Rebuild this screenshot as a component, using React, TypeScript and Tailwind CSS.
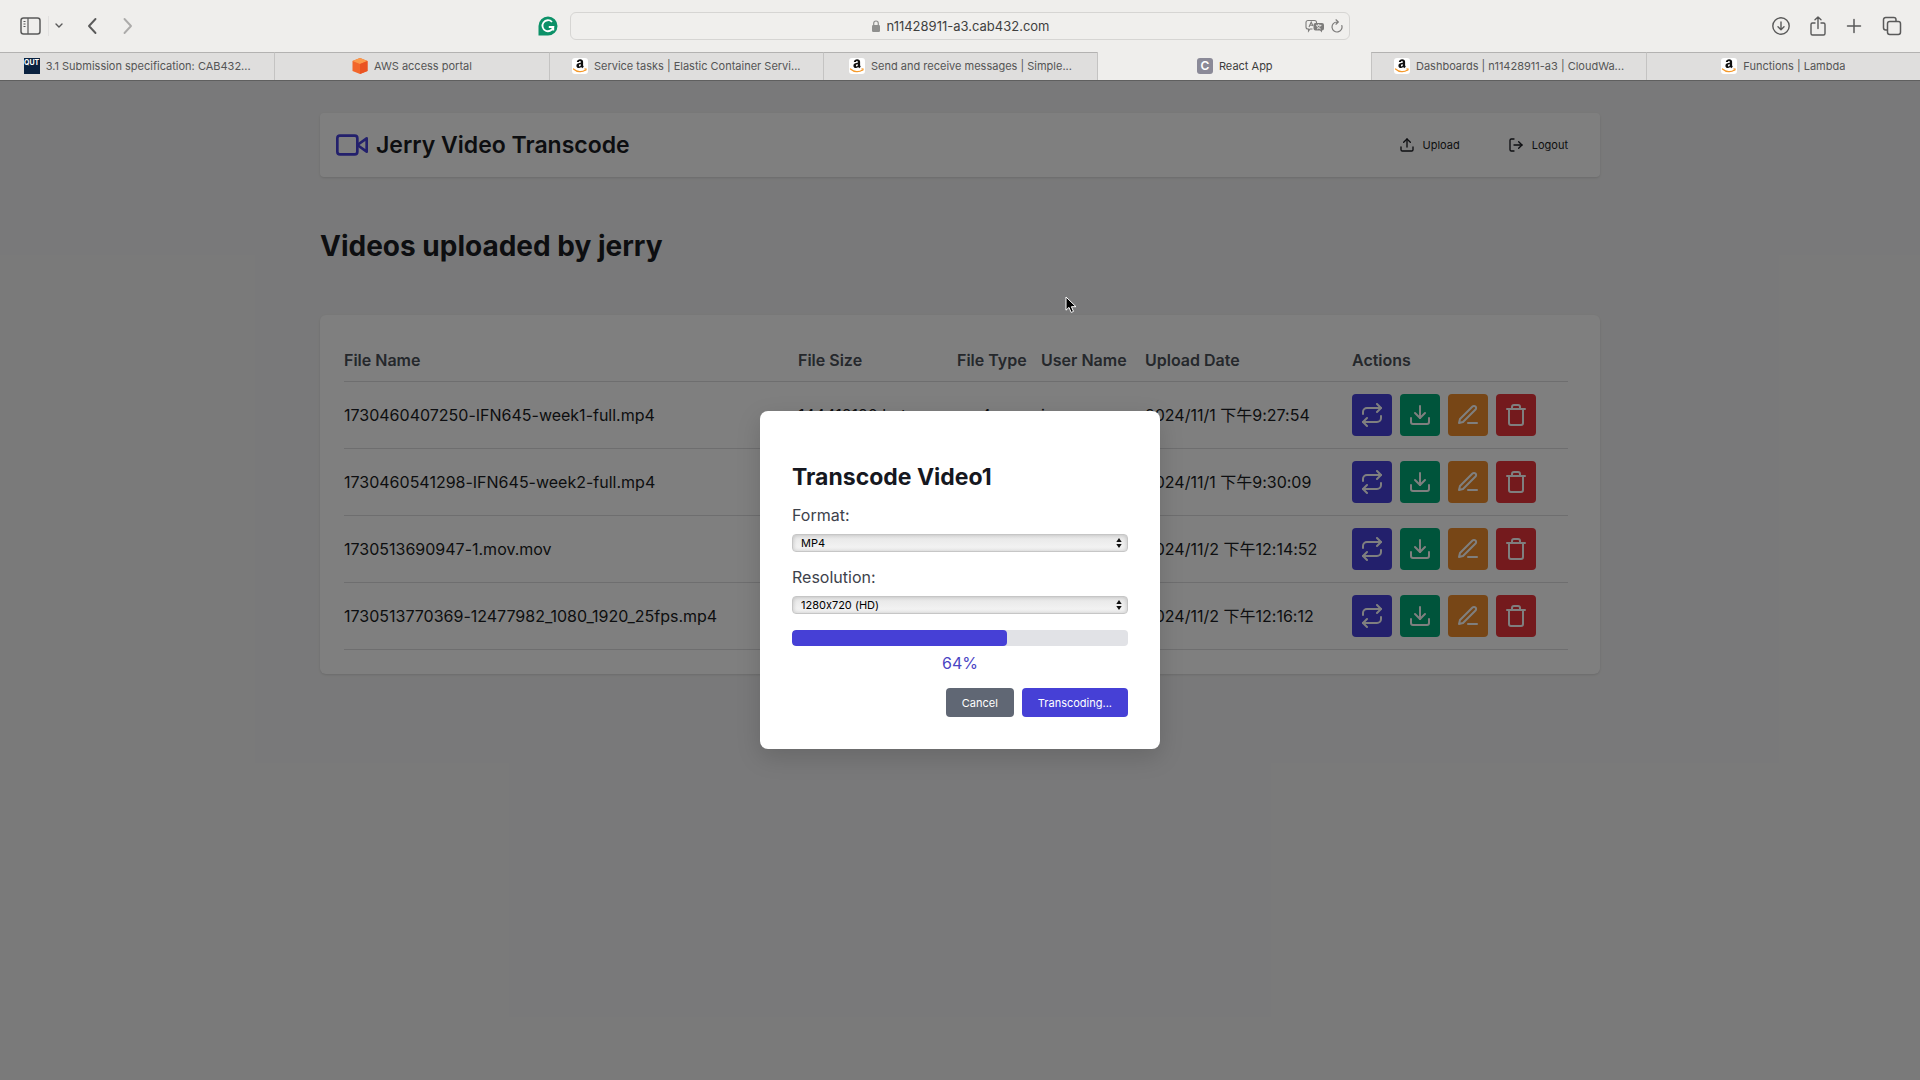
import type { ReactNode } from "react";
import {
  FiDownload,
  FiEdit3,
  FiLogOut,
  FiRepeat,
  FiTrash,
  FiUpload,
  FiVideo,
} from "react-icons/fi";

const videos = [
  { name: "1730460407250-IFN645-week1-full.mp4", size: "144412120 bytes", type: "mp4", user: "jerry", date: "2024/11/1 下午9:27:54" },
  { name: "1730460541298-IFN645-week2-full.mp4", size: "131240518 bytes", type: "mp4", user: "jerry", date: "2024/11/1 下午9:30:09" },
  { name: "1730513690947-1.mov.mov", size: "20481236 bytes", type: "mov", user: "jerry", date: "2024/11/2 下午12:14:52" },
  { name: "1730513770369-12477982_1080_1920_25fps.mp4", size: "8345120 bytes", type: "mp4", user: "jerry", date: "2024/11/2 下午12:16:12" },
];

function AmazonIcon() {
  return (
    <svg viewBox="0 0 16 16" className="size-4 shrink-0" aria-hidden="true">
      <rect width="16" height="16" rx="3" fill="#fff" />
      <path
        d="M4.800 3.900C5.100 2 6.500 1.200 8.100 1.200c1.900 0 3 .9 3 2.600v3.400c0 .6.3 1 .7 1.500L10.200 10.200c-.5-.4-.8-.7-1-1.100-1.700 1.700-4.800 1.200-4.800-1.400 0-2.200 2-2.800 4.400-2.900 0-1 0-1.700-.9-1.700-.6 0-.9.4-1 1zM8.800 6.300c-1.100 0-1.900.3-1.900 1.300 0 1.300 1.900 1.100 1.900-.6z"
        fill="#111"
      />
      <path d="M1.500 10.900c3.600 3.300 8.600 3.500 12 1" fill="none" stroke="#f59a2c" strokeWidth="1.300" strokeLinecap="round" />
      <path d="M12.300 10.900l2-.1-.5 1.900" fill="none" stroke="#f59a2c" strokeWidth=".9" />
    </svg>
  );
}

function AwsIcon() {
  return (
    <svg viewBox="0 0 16 16" className="size-4 shrink-0" aria-hidden="true">
      <path d="M8 0l7.500 3v10L8 16 .5 13V3z" fill="#f2662b" />
      <path d="M8 0l7.500 3L8 6 .5 3z" fill="#fb9a4b" />
      <path d="M8 6l7.500-3v10L8 16z" fill="#ea5321" />
    </svg>
  );
}

function QutIcon() {
  return (
    <span className="flex size-4 shrink-0 justify-center overflow-hidden bg-[#0a2240] text-[7px] leading-[10px] font-bold text-white">
      QUT
    </span>
  );
}

function ReactAppIcon() {
  return (
    <span className="flex size-4 shrink-0 items-center justify-center rounded-[3px] bg-[#8b8a98] text-[12px] leading-4 font-semibold text-white">
      C
    </span>
  );
}

const tabs: { title: string; icon: ReactNode; active?: boolean }[] = [
  { title: "3.1 Submission specification: CAB432...", icon: <QutIcon /> },
  { title: "AWS access portal", icon: <AwsIcon /> },
  { title: "Service tasks | Elastic Container Servi...", icon: <AmazonIcon /> },
  { title: "Send and receive messages | Simple...", icon: <AmazonIcon /> },
  { title: "React App", icon: <ReactAppIcon />, active: true },
  { title: "Dashboards | n11428911-a3 | CloudWa...", icon: <AmazonIcon /> },
  { title: "Functions | Lambda", icon: <AmazonIcon /> },
];

function Toolbar() {
  return (
    <div className="grid h-[52px] grid-cols-[1fr_780px_1fr] items-center text-[#5a5a5a]">
      <div className="flex items-center pl-5">
        <button type="button" aria-label="Show sidebar">
          <svg viewBox="0 0 22 18" className="h-[18px] w-[22px]" fill="none" stroke="currentColor" strokeWidth="1.500">
            <rect x="1" y="1" width="19" height="16" rx="2.500" />
            <path d="M8 1v16M3.500 4.500h2M3.500 7h2M3.500 9.500h2" strokeWidth="1.200" />
          </svg>
        </button>
        <span className="ml-1.5 h-5 w-px bg-[#e2e1e0]" />
        <button type="button" aria-label="Tab groups" className="ml-1.5">
          <svg viewBox="0 0 8 6" className="h-1.5 w-2" fill="none" stroke="currentColor" strokeWidth="1.400" strokeLinecap="round">
            <path d="M1 1l3 3 3-3" />
          </svg>
        </button>
        <button type="button" aria-label="Back" className="ml-6">
          <svg viewBox="0 0 10 18" className="h-[18px] w-2.5" fill="none" stroke="currentColor" strokeWidth="1.900" strokeLinecap="round" strokeLinejoin="round">
            <path d="M8.500 2L2 9l6.500 7" />
          </svg>
        </button>
        <button type="button" aria-label="Forward" className="ml-[26px] text-[#acabaa]">
          <svg viewBox="0 0 10 18" className="h-[18px] w-2.5" fill="none" stroke="currentColor" strokeWidth="1.900" strokeLinecap="round" strokeLinejoin="round">
            <path d="M1.500 2L8 9l-6.500 7" />
          </svg>
        </button>
        <button type="button" aria-label="Grammarly" className="mr-3 ml-auto">
          <svg viewBox="0 0 20 20" className="size-5">
            <path d="M10 .5A9.500 9.500 0 0 1 10 19.500H.5V10A9.500 9.500 0 0 1 10 .5z" fill="#0c9168" />
            <path d="M14 6A5.500 5.500 0 1 0 15.300 11H10.800M15.300 11v3.500" fill="none" stroke="#fff" strokeWidth="1.800" />
          </svg>
        </button>
      </div>
      <div className="flex h-7 items-center rounded-md border border-[#d6d5d3] bg-[#f0efed] px-1.5">
        <span className="w-10" />
        <div className="flex flex-1 items-center justify-center gap-1.5">
          <svg viewBox="0 0 8 12" className="h-3 w-2" aria-hidden="true">
            <rect x="0" y="5" width="8" height="7" rx="1.200" fill="#8f8f8e" />
            <path d="M1.700 5.500V3.300a2.300 2.300 0 0 1 4.600 0v2.200" fill="none" stroke="#8f8f8e" strokeWidth="1.200" />
          </svg>
          <span className="text-[13px] leading-5 text-[#3f3f3f]">n11428911-a3.cab432.com</span>
        </div>
        <div className="flex items-center gap-1.5 text-[#7d7c7b]">
          <button type="button" aria-label="Translate">
            <svg viewBox="0 0 20 14" className="h-3.5 w-5">
              <path d="M3 1.500h6.500a2 2 0 0 1 2 2v1M7.500 10H5l-1.500 2V10H3a2 2 0 0 1-2-2V3.500a2 2 0 0 1 2-2M4 8l2.200-5L8 7M4.700 6.300h2.800" fill="none" stroke="currentColor" strokeWidth="1.100" />
              <path d="M10.500 4H17a2 2 0 0 1 2 2v3.500a2 2 0 0 1-2 2v2l-2-2h-4.500a2 2 0 0 1-2-2V6a2 2 0 0 1 2-2z" fill="currentColor" />
              <path d="M11 6.300h5.500M13.700 5v1.300M12 10c2-1 3-2 3.300-3.700M12 7c.8 1.500 2 2.500 3.700 3" fill="none" stroke="#f0efed" strokeWidth=".9" />
            </svg>
          </button>
          <button type="button" aria-label="Reload">
            <svg viewBox="0 0 12 14" className="h-3.5 w-3" fill="none" stroke="currentColor" strokeWidth="1.200" strokeLinecap="round">
              <path d="M10.800 6.500A5 5 0 1 1 6 3h1M5 .8L7.300 3 5 5.200" />
            </svg>
          </button>
        </div>
      </div>
      <div className="flex items-center justify-end gap-5 pr-[18px]">
        <button type="button" aria-label="Downloads">
          <svg viewBox="0 0 18 18" className="size-[18px]" fill="none" stroke="currentColor" strokeWidth="1.400" strokeLinecap="round" strokeLinejoin="round">
            <circle cx="9" cy="9" r="8.200" />
            <path d="M9 5v7.500M6 9.800l3 3 3-3" />
          </svg>
        </button>
        <button type="button" aria-label="Share">
          <svg viewBox="0 0 16 20" className="h-5 w-4" fill="none" stroke="currentColor" strokeWidth="1.400" strokeLinecap="round" strokeLinejoin="round">
            <path d="M5 7H2.500A1.500 1.500 0 0 0 1 8.500v9A1.500 1.500 0 0 0 2.500 19h11a1.500 1.500 0 0 0 1.500-1.500v-9A1.500 1.500 0 0 0 13.500 7H11M8 12.500V1M5 3.800L8 1l3 2.800" />
          </svg>
        </button>
        <button type="button" aria-label="New tab">
          <svg viewBox="0 0 16 16" className="size-4" fill="none" stroke="currentColor" strokeWidth="1.500" strokeLinecap="round">
            <path d="M8 1.500v13M1.500 8h13" />
          </svg>
        </button>
        <button type="button" aria-label="Tab overview">
          <svg viewBox="0 0 20 20" className="size-5" fill="none" stroke="currentColor" strokeWidth="1.500">
            <rect x="5.500" y="5.500" width="13" height="13" rx="2.200" />
            <path d="M5.500 14H3.700a2.200 2.200 0 0 1-2.200-2.200V3.700a2.200 2.200 0 0 1 2.200-2.200h8.100A2.200 2.200 0 0 1 14 3.700v1.800" />
          </svg>
        </button>
      </div>
    </div>
  );
}

function Browser() {
  return (
    <div className="bg-[#efeeec]">
      <Toolbar />
      <div className="grid h-[29px] grid-cols-7 border-b border-[#5f5f5f]">
        {tabs.map((tab) => (
          <button
            type="button"
            key={tab.title}
            className={
              tab.active
                ? "flex min-w-0 items-center justify-center gap-1.5 border-l border-[#c4c3c2] text-[#3c3c3c]"
                : "flex min-w-0 items-center justify-center gap-1.5 border-t border-l border-t-[#b3b2b1] border-l-[#c4c3c2] bg-[#dfdedd] pb-px text-[#555] first:border-l-0"
            }
          >
            {tab.icon}
            <span className="truncate text-[11px] leading-4">{tab.title}</span>
          </button>
        ))}
      </div>
    </div>
  );
}

const actions = [
  { label: "Transcode", icon: FiRepeat, color: "bg-[#4640d8]" },
  { label: "Download", icon: FiDownload, color: "bg-[#00a877]" },
  { label: "Rename", icon: FiEdit3, color: "bg-[#ee8d2c]" },
  { label: "Delete", icon: FiTrash, color: "bg-[#e8343a]" },
];

function VideoTable() {
  return (
    <table className="w-full table-fixed border-collapse text-left text-base">
      <colgroup>
        <col className="w-[454px]" />
        <col className="w-[159px]" />
        <col className="w-[84px]" />
        <col className="w-[104px]" />
        <col className="w-[207px]" />
        <col />
      </colgroup>
      <thead>
        <tr className="h-[42px] border-b border-[#dcdcde] text-[#4b5058]">
          {["File Name", "File Size", "File Type", "User Name", "Upload Date", "Actions"].map((h) => (
            <th key={h} scope="col" className="font-semibold whitespace-nowrap">
              {h}
            </th>
          ))}
        </tr>
      </thead>
      <tbody>
        {videos.map((v) => (
          <tr key={v.name} className="h-[67px] border-b border-[#dcdcde] whitespace-nowrap">
            <td>{v.name}</td>
            <td>{v.size}</td>
            <td>{v.type}</td>
            <td>{v.user}</td>
            <td>{v.date}</td>
            <td>
              <div className="flex gap-2">
                {actions.map(({ label, icon: Icon, color }) => (
                  <button
                    type="button"
                    key={label}
                    aria-label={`${label} ${v.name}`}
                    className={`flex h-[42px] w-10 items-center justify-center rounded text-white ${color}`}
                  >
                    <Icon className="size-6" />
                  </button>
                ))}
              </div>
            </td>
          </tr>
        ))}
      </tbody>
    </table>
  );
}

function SelectField({ id, label, value }: { id: string; label: string; value: string }) {
  return (
    <div>
      <label htmlFor={id} className="block text-base leading-6 text-[#3d424b]">
        {label}
      </label>
      <div className="relative mt-[7px]">
        <select
          id={id}
          defaultValue={value}
          className="block h-[18px] w-full appearance-none rounded border border-[#c6c6c6] bg-linear-to-b from-[#e6e6e6] to-[#f6f6f6] px-2 text-[11px] leading-4 text-black shadow-[inset_0_0_4px_rgba(0,0,0,0.2)]"
        >
          <option>{value}</option>
        </select>
        <svg viewBox="0 0 6 10" className="pointer-events-none absolute top-1 right-1.5 h-2.5 w-1.5" aria-hidden="true">
          <path d="M3 0l2.700 4H.3zM3 10L.3 6h5.400z" fill="#111" />
        </svg>
      </div>
    </div>
  );
}

function TranscodeDialog({ progress }: { progress: number }) {
  return (
    <div
      role="dialog"
      aria-modal="true"
      aria-labelledby="dialog-title"
      className="w-[400px] rounded-lg bg-white px-8 pt-12 pb-8 shadow-[0_8px_24px_rgba(0,0,0,0.15)]"
    >
      <h2 id="dialog-title" className="text-[23px] leading-9 font-bold text-[#16181f]">
        Transcode Video1
      </h2>
      <div className="mt-2 flex flex-col gap-[13px]">
        <SelectField id="format" label="Format:" value="MP4" />
        <SelectField id="resolution" label="Resolution:" value="1280x720 (HD)" />
      </div>
      <div
        role="progressbar"
        aria-valuenow={progress}
        aria-valuemin={0}
        aria-valuemax={100}
        className="mt-4 h-4 overflow-hidden rounded bg-[#e1e2e6]"
      >
        <div className="h-full rounded bg-[#4640d6]" style={{ width: `${progress}%` }} />
      </div>
      <p className="mt-[5px] text-center text-base leading-6 text-[#4a45c4]">{progress}%</p>
      <div className="mt-[13px] flex justify-end gap-2 text-[11px] leading-4 text-white">
        <button type="button" className="h-[29px] rounded bg-[#606774] px-4">
          Cancel
        </button>
        <button type="button" className="h-[29px] rounded bg-[#4640d6] px-4">
          Transcoding...
        </button>
      </div>
    </div>
  );
}

export default function App() {
  return (
    <div className="flex min-h-screen flex-col font-[Inter,'Noto_Sans_CJK_SC',sans-serif] [font-feature-settings:'calt'_0]">
      <Browser />
      <div className="relative flex-1 bg-[#f3f3f4] text-[#1a1c22]">
        <main className="mx-auto max-w-[1280px] pt-8">
          <header className="flex h-16 items-center justify-between rounded-sm bg-white pr-8 pl-4 shadow-sm">
            <div className="flex items-center gap-2">
              <FiVideo className="size-8 text-[#4640d8]" />
              <h1 className="text-[23px] leading-8 font-semibold">Jerry Video Transcode</h1>
            </div>
            <nav className="flex gap-12 text-[11px] leading-4">
              <a href="#upload" className="flex items-center gap-2">
                <FiUpload className="size-4" />
                Upload
              </a>
              <a href="#logout" className="flex items-center gap-2">
                <FiLogOut className="size-4" />
                Logout
              </a>
            </nav>
          </header>
          <h2 className="mt-12 text-[28px] leading-[42px] font-bold">Videos uploaded by jerry</h2>
          <section className="mt-12 rounded-md bg-white py-6 pr-8 pl-6 shadow-sm">
            <VideoTable />
          </section>
        </main>
        <div className="absolute inset-0 flex items-start justify-center bg-black/50 pt-[330px]">
          <TranscodeDialog progress={64} />
        </div>
        <svg viewBox="0 0 12 18" className="absolute top-[215px] left-[1065px] h-[18px] w-3" aria-hidden="true">
          <path d="M1 1v13.200l3-2.800 2.200 5 2.300-1-2.100-4.700h4.600z" fill="#000" stroke="#fff" strokeWidth="1" />
        </svg>
      </div>
    </div>
  );
}
